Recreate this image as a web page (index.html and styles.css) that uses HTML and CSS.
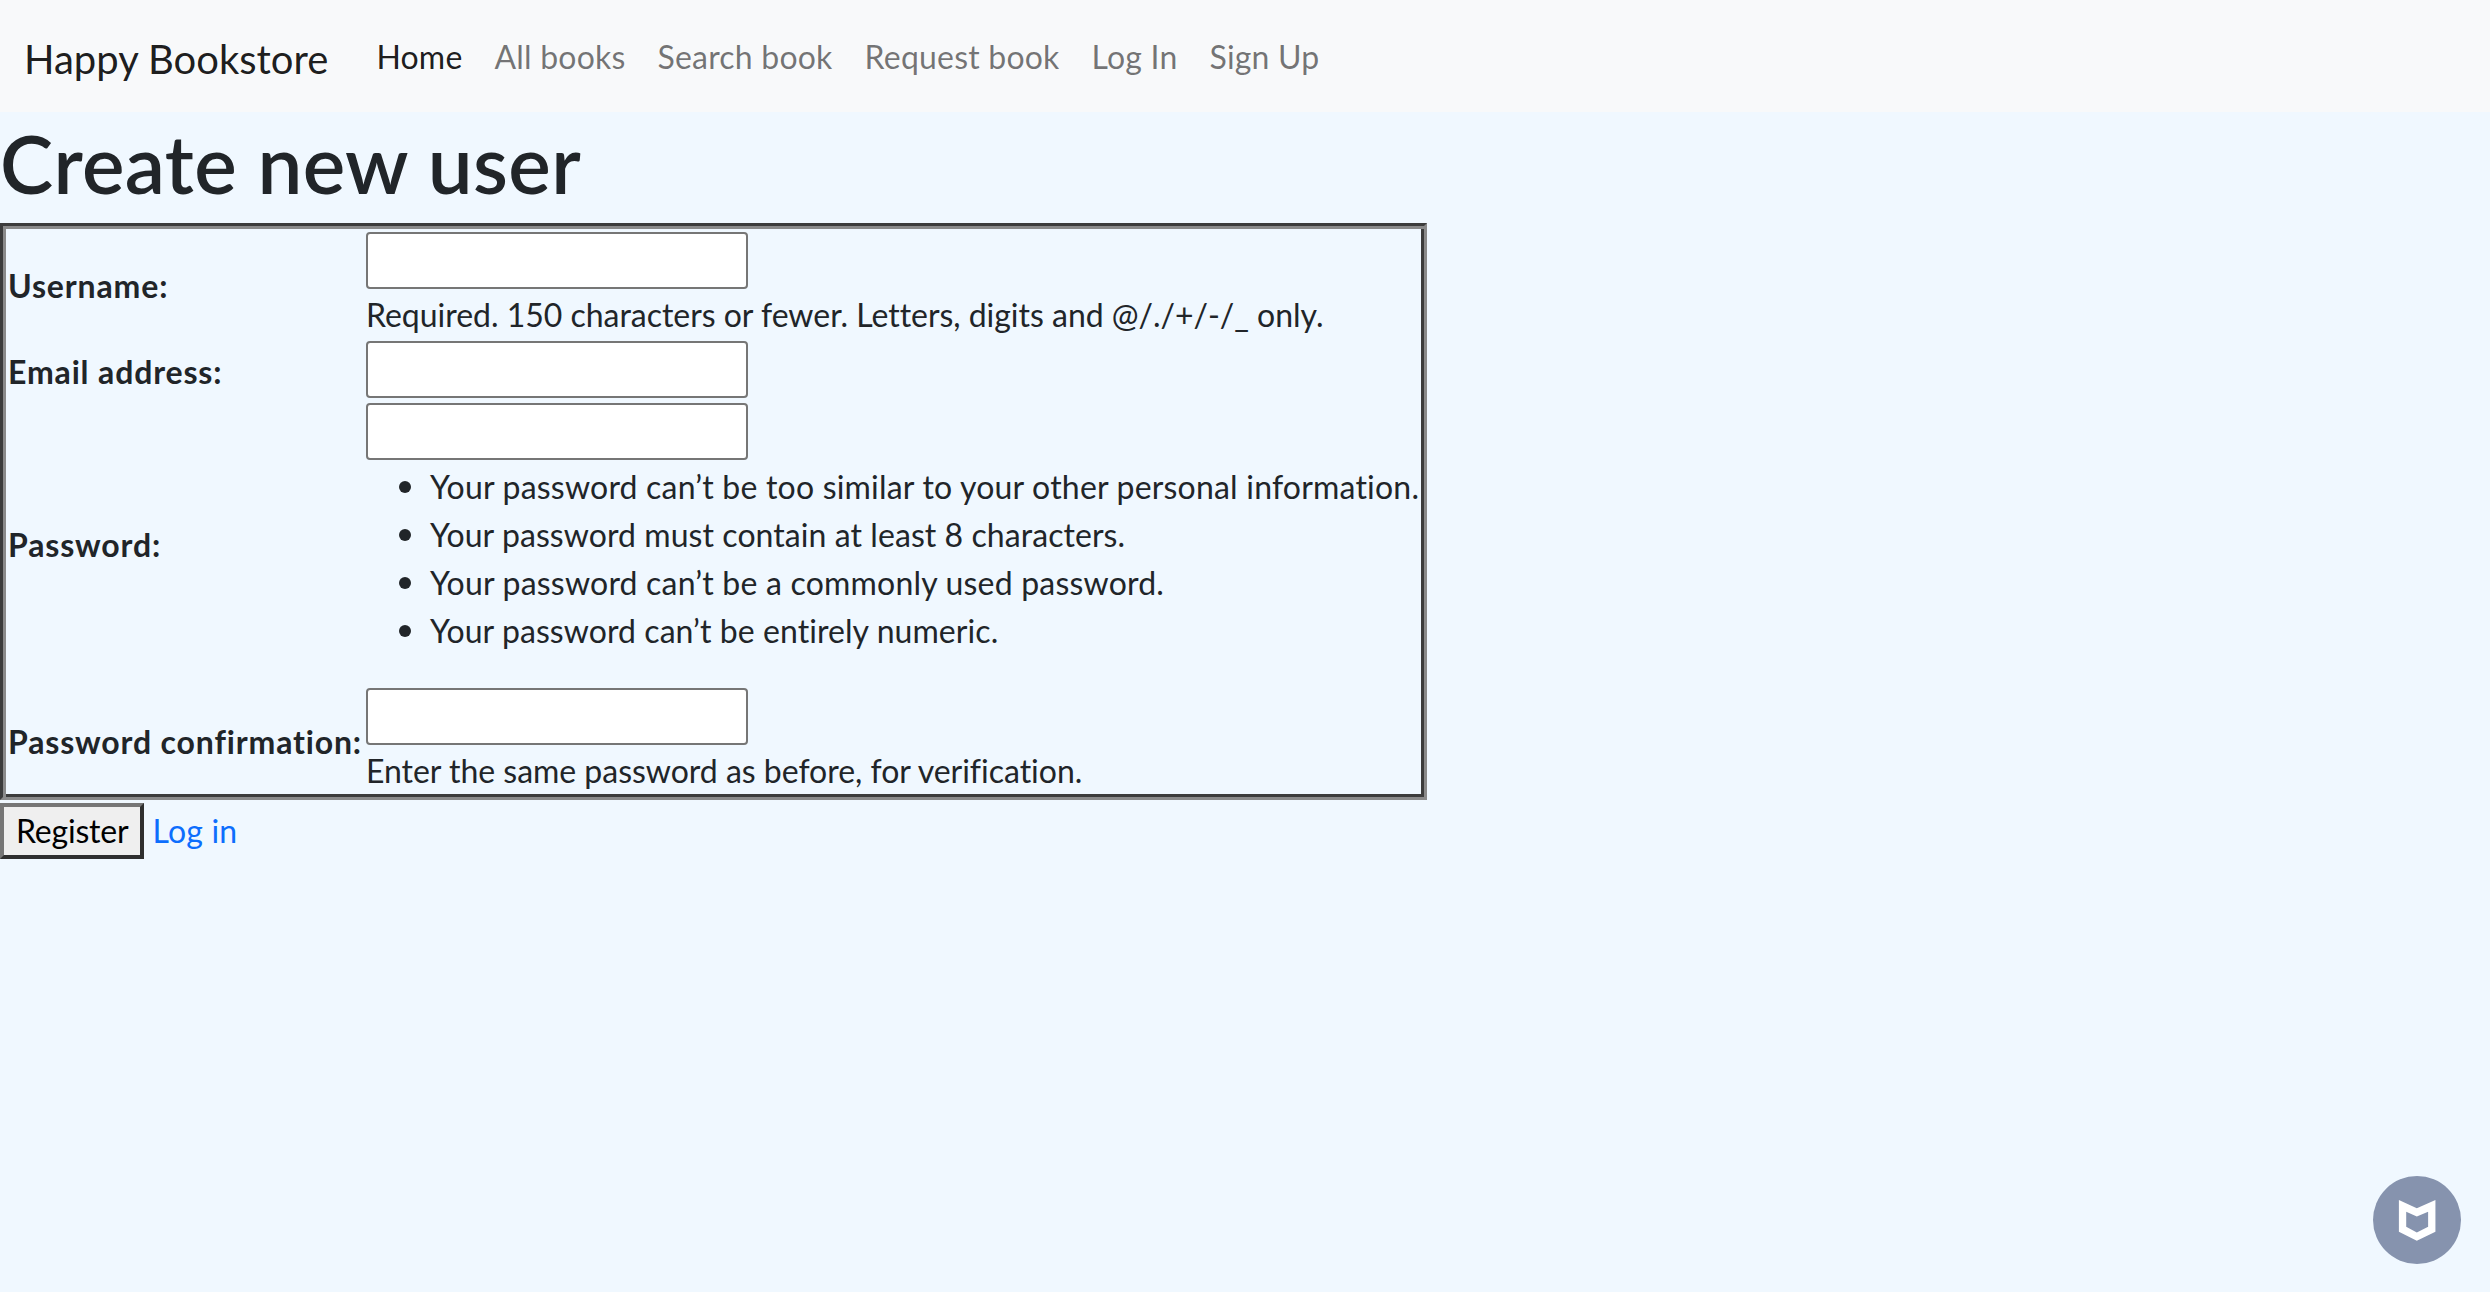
FILE: index.html
```html
<!DOCTYPE html>
<html lang="en">
<head>
<meta charset="utf-8">
<title>Happy Bookstore</title>
<link rel="stylesheet" href="styles.css">
</head>
<body>
<nav class="navbar">
  <a class="brand" href="#">Happy Bookstore</a>
  <ul class="nav-list">
    <li><a class="nav-link active" href="#">Home</a></li>
    <li><a class="nav-link" href="#">All books</a></li>
    <li><a class="nav-link" href="#">Search book</a></li>
    <li><a class="nav-link" href="#">Request book</a></li>
    <li><a class="nav-link" href="#">Log In</a></li>
    <li><a class="nav-link" href="#">Sign Up</a></li>
  </ul>
</nav>
<main>
  <h1 class="title">Create new user</h1>
  <form class="signup">
    <table class="form-table">
      <tr>
        <th><label for="username">Username:</label></th>
        <td><input id="username" class="field" type="text"><span class="help">Required. 150 characters or fewer. Letters, digits and @/./+/-/_ only.</span></td>
      </tr>
      <tr>
        <th><label for="email">Email address:</label></th>
        <td class="email-cell"><input id="email" class="field" type="email"></td>
      </tr>
      <tr>
        <th><label for="password1">Password:</label></th>
        <td>
          <input id="password1" class="field" type="password">
          <ul class="rules">
            <li>Your password can’t be too similar to your other personal information.</li>
            <li>Your password must contain at least 8 characters.</li>
            <li>Your password can’t be a commonly used password.</li>
            <li>Your password can’t be entirely numeric.</li>
          </ul>
        </td>
      </tr>
      <tr>
        <th><label for="password2">Password confirmation:</label></th>
        <td><input id="password2" class="field" type="password"><span class="help">Enter the same password as before, for verification.</span></td>
      </tr>
    </table>
    <div class="actions">
      <button class="register" type="button">Register</button>
      <a class="login" href="#">Log in</a>
    </div>
  </form>
</main>
<div class="badge">
  <svg class="badge-icon" viewBox="0 0 265 265" aria-hidden="true">
    <path fill-rule="evenodd" d="M78 72L132 97L188 72V168L132 195L78 168ZM100 108V153L132 170L166 153V108L132 122Z"/>
  </svg>
</div>
</body>
</html>
```
FILE: styles.css
```css
* { box-sizing: border-box; }
html, body { margin: 0; padding: 0; }
body {
  min-height: 1292px;
  background: #f0f8ff;
  color: #212529;
  font-family: "Lato", "Open Sans", sans-serif;
  font-size: 32px;
  line-height: 48px;
  letter-spacing: 0.2px;
}
a { text-decoration: none; }

.navbar {
  display: flex;
  align-items: center;
  height: 112px;
  padding: 0 24px;
  background: #f8f9fa;
}
.brand {
  margin-right: 32px;
  padding-top: 6px;
  font-size: 40px;
  line-height: 60px;
  letter-spacing: 0;
  color: rgba(0, 0, 0, 0.9);
}
.nav-list {
  display: flex;
  margin: 0;
  padding: 0;
  list-style: none;
}
.nav-link {
  display: block;
  padding: 1px 16px 0;
  color: rgba(0, 0, 0, 0.55);
}
.nav-link.active { color: rgba(0, 0, 0, 0.9); }

.title {
  margin: 0 0 12px;
  padding-top: 3px;
  font-size: 80px;
  line-height: 96px;
  font-weight: 600;
  letter-spacing: 0.4px;
}

.form-table {
  padding: 3px;
  border-collapse: separate;
  border-spacing: 0;
  border-style: solid;
  border-width: 3px;
  border-color: #3c3c3c #8a8a8a #8a8a8a #3c3c3c;
  box-shadow: inset 3px 3px 0 #8a8a8a, inset -3px -3px 0 #3c3c3c;
}
.form-table th {
  padding: 5px 2px 0 2px;
  text-align: left;
  vertical-align: middle;
  font-weight: 700;
  letter-spacing: 0.85px;
  white-space: nowrap;
}
.form-table td {
  padding: 3px 2px 0 2px;
  vertical-align: top;
}
.form-table .email-cell { padding-bottom: 1px; }
.form-table label { display: inline-block; }
.field {
  display: block;
  width: 382px;
  height: 57px;
  margin-bottom: 1px;
  padding: 2px 4px;
  background: #fff;
  border: 2px solid #767676;
  border-radius: 4px;
}
.help {
  display: block;
  padding-top: 2px;
  line-height: 46px;
  letter-spacing: -0.02px;
  white-space: nowrap;
}
.rules {
  margin: 0 0 32px;
  padding: 0 0 0 64px;
}
.rules li { height: 48px; }
.rules li:nth-child(even) { letter-spacing: 0.07px; }
.rules li::marker { font-size: 37px; }

.actions {
  display: flex;
  align-items: center;
  gap: 8px;
  margin-top: 3px;
}
.register {
  height: 56px;
  padding: 0 12px;
  background: #efefef;
  color: #000;
  font: inherit;
  letter-spacing: -0.2px;
  border-style: solid;
  border-width: 4px;
  border-color: #767676 #2f2f2f #2f2f2f #767676;
}
.login { color: #0d6efd; }

.badge {
  position: fixed;
  right: 29px;
  bottom: 28px;
  display: flex;
  width: 88px;
  height: 88px;
  border-radius: 50%;
  background: #8693ae;
}
.badge-icon { width: 88px; height: 88px; fill: #fff; }
```
